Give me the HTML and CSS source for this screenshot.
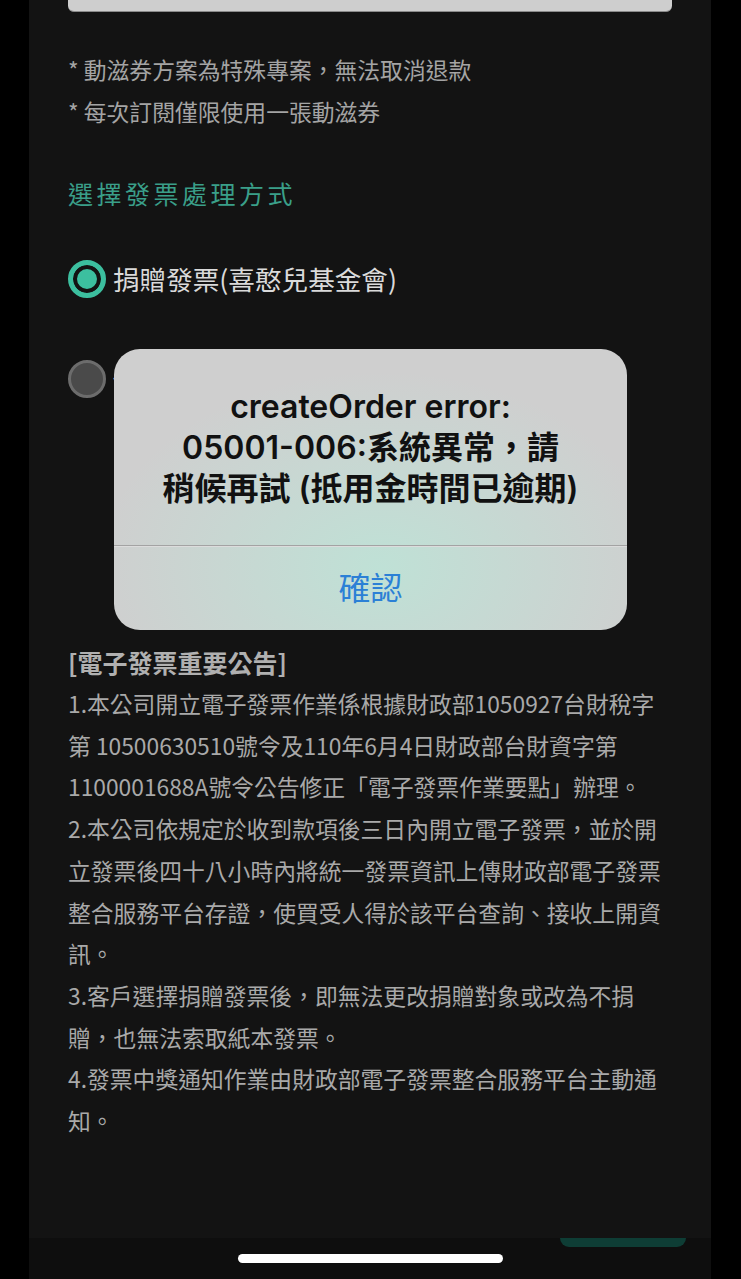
FILE: index.html
```html
<!DOCTYPE html>
<html lang="zh-Hant">
<head>
  <meta charset="UTF-8">
  <meta name="viewport" content="width=device-width, initial-scale=1.0">
  <title>選擇發票處理方式</title>
  <link rel="stylesheet" href="styles.css">
</head>
<body>
  <div class="screen">
    <main class="content">
      <div class="input-bar"></div>

      <div class="notes">
        <p>* 動滋券方案為特殊專案，無法取消退款</p>
        <p>* 每次訂閱僅限使用一張動滋券</p>
      </div>

      <h2 class="section-title">選擇發票處理方式</h2>

      <label class="radio-row">
        <span class="radio checked"></span>
        <span class="radio-label">捐贈發票(喜憨兒基金會)</span>
      </label>
      <label class="radio-row second">
        <span class="radio"></span>
        <span class="radio-label">個人電子發票</span>
      </label>

      <div class="notice">
        <h3 class="notice-title">[電子發票重要公告]</h3>
        <p>1.本公司開立電子發票作業係根據財政部1050927台財稅字第 10500630510號令及110年6月4日財政部台財資字第1100001688A號令公告修正「電子發票作業要點」辦理。</p>
        <p>2.本公司依規定於收到款項後三日內開立電子發票，並於開立發票後四十八小時內將統一發票資訊上傳財政部電子發票整合服務平台存證，使買受人得於該平台查詢、接收上開資訊。</p>
        <p>3.客戶選擇捐贈發票後，即無法更改捐贈對象或改為不捐贈，也無法索取紙本發票。</p>
        <p>4.發票中獎通知作業由財政部電子發票整合服務平台主動通知。</p>
      </div>
    </main>

    <footer class="bottom-bar">
      <div class="pay-stub"></div>
      <div class="home-indicator"></div>
    </footer>

    <div class="alert">
      <div class="alert-body">
        createOrder error:<br>
        05001-006:系統異常，請<br>
        稍候再試 (抵用金時間已逾期)
      </div>
      <div class="alert-btn">確認</div>
    </div>
  </div>
</body>
</html>
```

FILE: styles.css
```css
body {
  margin: 0;
  background: #000;
  font-family: "Noto Sans CJK TC", "Noto Sans", sans-serif;
}

.screen {
  position: relative;
  width: 682px;
  min-height: 100vh;
  margin-left: 29px;
  background: #131313;
  display: flex;
  flex-direction: column;
  overflow: hidden;
}

.content {
  flex: 1;
  padding: 0 39px;
}

.input-bar {
  height: 11px;
  background: #cecece;
  border-bottom: 1px solid #8a8a8a;
  border-radius: 0 0 6px 6px;
}

.notes {
  margin-top: 37px;
}

.notes p {
  margin: 0;
  font-size: 22.8px;
  line-height: 42px;
  color: #a4a4a4;
}

.section-title {
  margin: 39px 0 0;
  font-size: 25px;
  font-weight: normal;
  letter-spacing: 3.5px;
  line-height: 42px;
  color: #3a9f89;
}

.radio-row {
  display: flex;
  align-items: center;
  gap: 7px;
  height: 42px;
  margin-top: 44px;
}

.radio-row.second {
  margin-top: 58px;
}

.radio {
  box-sizing: border-box;
  width: 38px;
  height: 38px;
  border-radius: 50%;
  background: #4a4a4a;
  border: 3px solid #6c6c6c;
  flex-shrink: 0;
}

.radio.checked {
  background: #3cbf9f;
  border: 5px solid #3cbf9f;
  box-shadow: inset 0 0 0 4px #131313;
}

.radio-label {
  font-size: 26.6px;
  color: #dadada;
  line-height: 42px;
}

.notice {
  margin-top: 241px;
}

.notice-title {
  margin: 0;
  font-size: 25px;
  line-height: 42px;
  font-weight: bold;
  color: #b0b0b0;
}

.notice p {
  margin: 0;
  font-size: 22.8px;
  line-height: 41.7px;
  color: #a9a9a9;
}

.bottom-bar {
  height: 41px;
  background: #0e0e0e;
  display: flex;
  flex-direction: column;
  align-items: center;
  position: relative;
}

.pay-stub {
  position: absolute;
  top: 0;
  right: 25px;
  width: 126px;
  height: 9px;
  background: #0e3d35;
  border-radius: 0 0 14px 14px;
}

.home-indicator {
  margin-top: 16px;
  width: 265px;
  height: 9px;
  border-radius: 5px;
  background: #fff;
}

.alert {
  position: absolute;
  left: 85px;
  top: 349px;
  width: 513px;
  height: 281px;
  border-radius: 26px;
  background:
    radial-gradient(ellipse 55% 70% at 52% 78%, #bfe1d6 0%, rgba(207, 207, 207, 0) 100%),
    #cfcfcf;
  display: flex;
  flex-direction: column;
  overflow: hidden;
}

.alert-body {
  height: 197px;
  box-sizing: border-box;
  padding-top: 37px;
  text-align: center;
  font-family: Inter, "Noto Sans CJK TC", sans-serif;
  font-size: 32px;
  font-weight: 600;
  line-height: 41px;
  color: #111;
  border-bottom: 1px solid #a3a3a3;
  box-shadow: 0 1px 0 #dcdcdc;
}

.alert-btn {
  flex: 1;
  display: flex;
  align-items: center;
  justify-content: center;
  padding-bottom: 4px;
  font-size: 32px;
  color: #2b80d6;
}
```
